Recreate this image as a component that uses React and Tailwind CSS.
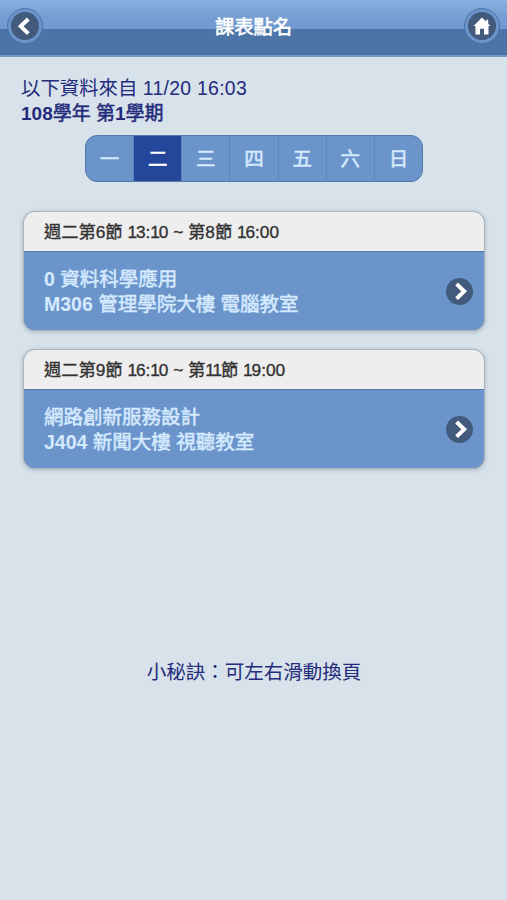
const DAYS = ['一', '二', '三', '四', '五', '六', '日'];

const COURSES = [
  { time: '週二第6節 13:10 ~ 第8節 16:00', name: '0 資料科學應用', room: 'M306 管理學院大樓 電腦教室' },
  { time: '週二第9節 16:10 ~ 第11節 19:00', name: '網路創新服務設計', room: 'J404 新聞大樓 視聽教室' },
];

function RoundButton({ label, children }) {
  return (
    <button aria-label={label} className="flex size-[36px] items-center justify-center rounded-full border border-[#4c73a6] bg-[#6b95ca]">
      <span className="flex size-[28px] items-center justify-center rounded-full bg-[#425a7b]">{children}</span>
    </button>
  );
}

function Chevron({ left = false }) {
  return (
    <svg width="27" height="27" viewBox="0 0 27 27" fill="none" stroke="#fff" strokeWidth="4">
      <path d={left ? 'M16.3 6L8.7 13.3L16.3 20.6' : 'M10.6 6L18.2 13.3L10.6 20.6'} />
    </svg>
  );
}

// Sets each digit one narrower than the other figures.
function TightOnes({ text }) {
  return text.split(/(1)/).map((part, i) =>
    part === '1' ? <span key={i} className="tracking-[-1.1px]">1</span> : part
  );
}

// Room codes and numbers use the bold Latin face; the ideographs keep a medium weight.
function Mixed({ text }) {
  return text.split(/([A-Z0-9]+)/).map((part, i) =>
    /^[A-Z0-9]+$/.test(part) ? <b key={i} className="font-bold [-webkit-text-stroke:0px]">{part}</b> : part
  );
}

function Course({ time, name, room }) {
  return (
    <section className="h-[120px] overflow-hidden rounded-[12px] border border-[#aeb4bb] bg-[#6b95ca] shadow-[0_1px_4px_rgba(70,90,110,0.35)]">
      <h2 className="-mx-px h-[40px] border-b border-[#5379aa] bg-[#eeeeee] pl-[21px] text-[17.25px] leading-[40px] font-normal text-[#333] [-webkit-text-stroke:0.35px_#333]">
        <TightOnes text={time} />
      </h2>
      <div className="-mx-px flex h-[79px] items-center justify-between rounded-b-[12px] border border-t-0 border-[#456fa5] pr-[11px] pl-[20px]">
        <div className="pt-px text-[19.5px] leading-[24.5px] text-[#d5e9ff] [-webkit-text-stroke:0.5px_#d5e9ff]">
          <p><Mixed text={name} /></p>
          <p><Mixed text={room} /></p>
        </div>
        <span className="size-[27px] rounded-full bg-[#425a7b]"><Chevron /></span>
      </div>
    </section>
  );
}

export default function App() {
  return (
    <div className="h-[900px] w-[507px] overflow-hidden bg-[#d7e2ea] font-['Liberation_Sans','Noto_Sans_CJK_TC',sans-serif]">
      <header className="flex h-[57px] items-start justify-between border-b-2 border-[#7598c4] bg-[linear-gradient(to_bottom,#8ab1df_0px,#769fd3_15px,#7199cf_29px,#4c74a8_29px,#4c74a5_54px,#456a9c_55px)] pt-[8px] pr-[7px] pl-[7px]">
        <RoundButton label="返回"><Chevron left /></RoundButton>
        <h1 className="pt-[6px] text-[19.3px] leading-[28px] font-normal text-white [-webkit-text-stroke:0.6px_#fff]">課表點名</h1>
        <RoundButton label="首頁">
          <svg width="18" height="18" viewBox="0 0 18 18" fill="#fff">
            <path d="M9 0.5L0.5 9H2.5V17.5H7V11.8H11V17.5H15.5V9H17.5L15.2 6.7V2.8H13.2V4.7Z" />
          </svg>
        </RoundButton>
      </header>
      <main className="pt-[19px] pr-[22px] pl-[23px] text-[#252b7c]">
        <p className="-ml-[2px] text-[19.4px] leading-[25px]">以下資料來自 <span className="tracking-[0.3px]">11/20 16:03</span></p>
        <p className="-ml-[2px] pt-px text-[19px] leading-[24px] [-webkit-text-stroke:0.5px_#252b7c]"><Mixed text="108學年 第1學期" /></p>
        <nav className="mx-auto mt-[9px] flex h-[47px] w-[338px] overflow-hidden rounded-[12px] border border-[#5379aa] bg-[#6b95ca]">
          {DAYS.map((day, i) => (
            <button key={day} className={`flex-1 border-[#5b85ba] pt-[2px] text-[19.5px] ${i < 6 ? 'border-r' : ''} ${i === 1 ? 'bg-[#25479b] text-white [-webkit-text-stroke:0.5px_#fff]' : 'text-[#d5e9ff] [-webkit-text-stroke:0.5px_#d5e9ff]'}`}>{day}</button>
          ))}
        </nav>
        <div className="mt-[29px] flex flex-col gap-[18px]">
          {COURSES.map((course) => <Course key={course.time} {...course} />)}
        </div>
        <p className="mt-[190px] text-center text-[19.5px] leading-[26px]">小秘訣：可左右滑動換頁</p>
      </main>
    </div>
  );
}
